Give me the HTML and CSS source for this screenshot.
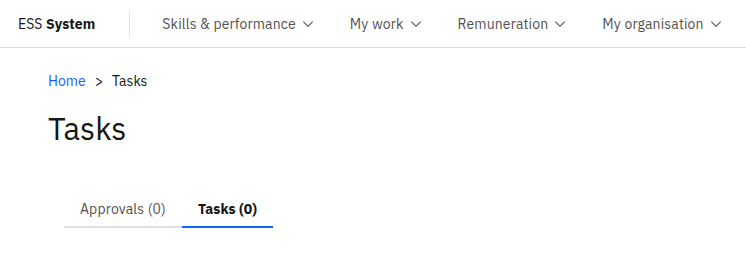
FILE: index.html
```html
<!DOCTYPE html>
<html lang="en">
<head>
<meta charset="utf-8">
<title>Tasks</title>
<link rel="stylesheet" href="styles.css">
</head>
<body>
<header class="shell">
  <a class="shell-name" href="#">ESS <b>System</b></a>
  <nav class="shell-nav">
    <a class="menu-item" href="#">Skills &amp; performance<svg class="chev" viewBox="0 0 16 16" aria-hidden="true"><path d="M8 11L3 6 3.7 5.3 8 9.6 12.3 5.3 13 6z"/></svg></a>
    <a class="menu-item" href="#">My work<svg class="chev" viewBox="0 0 16 16" aria-hidden="true"><path d="M8 11L3 6 3.7 5.3 8 9.6 12.3 5.3 13 6z"/></svg></a>
    <a class="menu-item" href="#">Remuneration<svg class="chev" viewBox="0 0 16 16" aria-hidden="true"><path d="M8 11L3 6 3.7 5.3 8 9.6 12.3 5.3 13 6z"/></svg></a>
    <a class="menu-item" href="#">My organisation<svg class="chev" viewBox="0 0 16 16" aria-hidden="true"><path d="M8 11L3 6 3.7 5.3 8 9.6 12.3 5.3 13 6z"/></svg></a>
  </nav>
</header>
<main class="page">
  <ol class="crumbs">
    <li><a href="#">Home</a></li>
    <li class="sep">&gt;</li>
    <li>Tasks</li>
  </ol>
  <h1 class="title">Tasks</h1>
  <div class="tabs">
    <a class="tab" href="#">Approvals (0)</a>
    <a class="tab active" href="#">Tasks (0)</a>
  </div>
</main>
</body>
</html>
```
FILE: styles.css
```css
* { box-sizing: border-box; }
html, body { margin: 0; padding: 0; background: #fff; }
body {
  font-family: "IBM Plex Sans", "Liberation Sans", Arial, sans-serif;
  color: #161616;
  font-size: 14px;
  line-height: 18px;
}
a { text-decoration: none; color: inherit; }

.shell {
  height: 48px;
  border-bottom: 1px solid #e0e0e0;
  display: flex;
  align-items: center;
}
.shell-name {
  padding: 0 34px 0 18px;
  font-size: 14px;
  color: #161616;
  letter-spacing: 0.1px;
}
.shell-name b { font-weight: 700; }
.shell-nav {
  display: flex;
  align-items: center;
  height: 100%;
  padding-left: 17px;
  position: relative;
}
.shell-nav::before {
  content: "";
  position: absolute;
  left: 0;
  top: 12px;
  height: 24px;
  width: 1px;
  background: #e0e0e0;
}
.menu-item {
  display: flex;
  align-items: center;
  height: 100%;
  padding: 0 16px;
  color: #525252;
  font-size: 14px;
  letter-spacing: 0.15px;
}
.chev {
  width: 16px;
  height: 16px;
  margin: 1px 2px 0 4px;
  fill: #525252;
}

.page { padding: 24px 48px 0; }
.crumbs {
  list-style: none;
  margin: 0;
  padding: 0;
  display: flex;
  gap: 9px;
  font-size: 14px;
  line-height: 18px;
}
.crumbs a { color: #0f62fe; }
.crumbs .sep { color: #161616; }
.title {
  margin: 19px 0 0;
  font-size: 31px;
  line-height: 40px;
  font-weight: 400;
  color: #161616;
}
.tabs {
  display: flex;
  margin: 40px 0 0 16px;
}
.tab {
  padding: 11px 16px 8px;
  border-bottom: 2px solid #e0e0e0;
  color: #525252;
  font-size: 14px;
  line-height: 18px;
  letter-spacing: 0.15px;
}
.tab.active {
  border-bottom-color: #0f62fe;
  color: #161616;
  font-weight: 700;
  letter-spacing: 0.1px;
}
```
